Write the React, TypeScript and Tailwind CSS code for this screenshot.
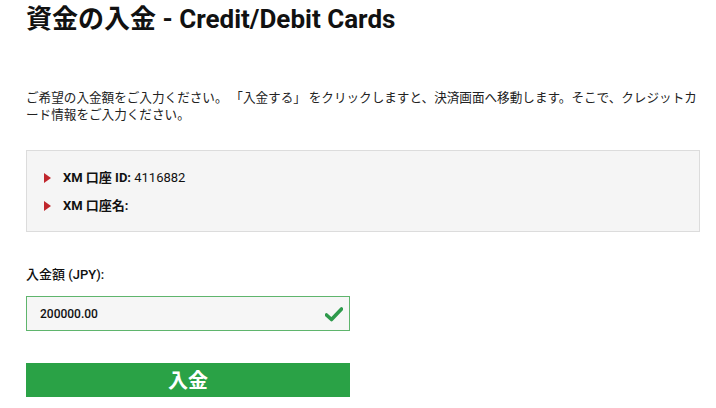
import React from "react";

const jp = { fontFamily: '"Noto Sans CJK JP", sans-serif' };
const rb = { fontFamily: 'Roboto, "Noto Sans CJK JP", sans-serif' };

function Tri() {
  return (
    <svg width="7" height="10" viewBox="0 0 7 10" className="shrink-0">
      <path d="M0 0 L7 5 L0 10 Z" fill="#c0272d" />
    </svg>
  );
}

export default function App() {
  return (
    <div className="w-[716px] h-[408px] bg-white text-[#111] overflow-hidden">
      <div className="pl-[26px] pr-[16px]">
        <h1 className="text-[26px] font-bold leading-[26px] pt-[6px] text-[#111]" style={rb}>
          資金の入金 - Credit/Debit Cards
        </h1>
        <p className="mt-[56px] text-[12.6px] leading-[17px] text-[#222] whitespace-nowrap" style={jp}>
          ご希望の入金額をご入力ください。 「入金する」 をクリックしますと、決済画面へ移動します。そこで、クレジットカ
          <br />
          ード情報をご入力ください。
        </p>
        <div className="mt-[28px] w-[674px] h-[82px] bg-[#f5f5f5] border border-[#dcdcdc] pl-[17px] pt-[19px] flex flex-col gap-[12px]">
          <div className="flex items-center gap-[12px] h-[16px] text-[13px]" style={rb}>
            <Tri />
            <span>
              <b className="font-bold">XM 口座 ID:</b> 4116882
            </span>
          </div>
          <div className="flex items-center gap-[12px] h-[16px] text-[13px]" style={rb}>
            <Tri />
            <span>
              <b className="font-bold">XM 口座名:</b>
            </span>
          </div>
        </div>
        <div className="mt-[35px] text-[13px] font-medium leading-[16px]" style={rb}>
          入金額 (JPY):
        </div>
        <div className="mt-[13px] w-[324px] h-[35px] border border-[#5fb56d] bg-[#f6f6f6] flex items-center justify-between pl-[13px] pr-[6px]">
          <span className="text-[12px] font-medium text-[#111]" style={rb}>200000.00</span>
          <svg width="18" height="16" viewBox="0 0 18 16">
            <path d="M1.5 9 L6.5 13.5 L16.5 3" stroke="#2e9a4c" strokeWidth="3.6" fill="none" strokeLinecap="round" strokeLinejoin="round" />
          </svg>
        </div>
        <button className="mt-[32px] w-[324px] h-[34px] bg-[#2aa246] text-white text-[20px] font-bold flex items-center justify-center" style={jp}>
          入金
        </button>
      </div>
    </div>
  );
}
